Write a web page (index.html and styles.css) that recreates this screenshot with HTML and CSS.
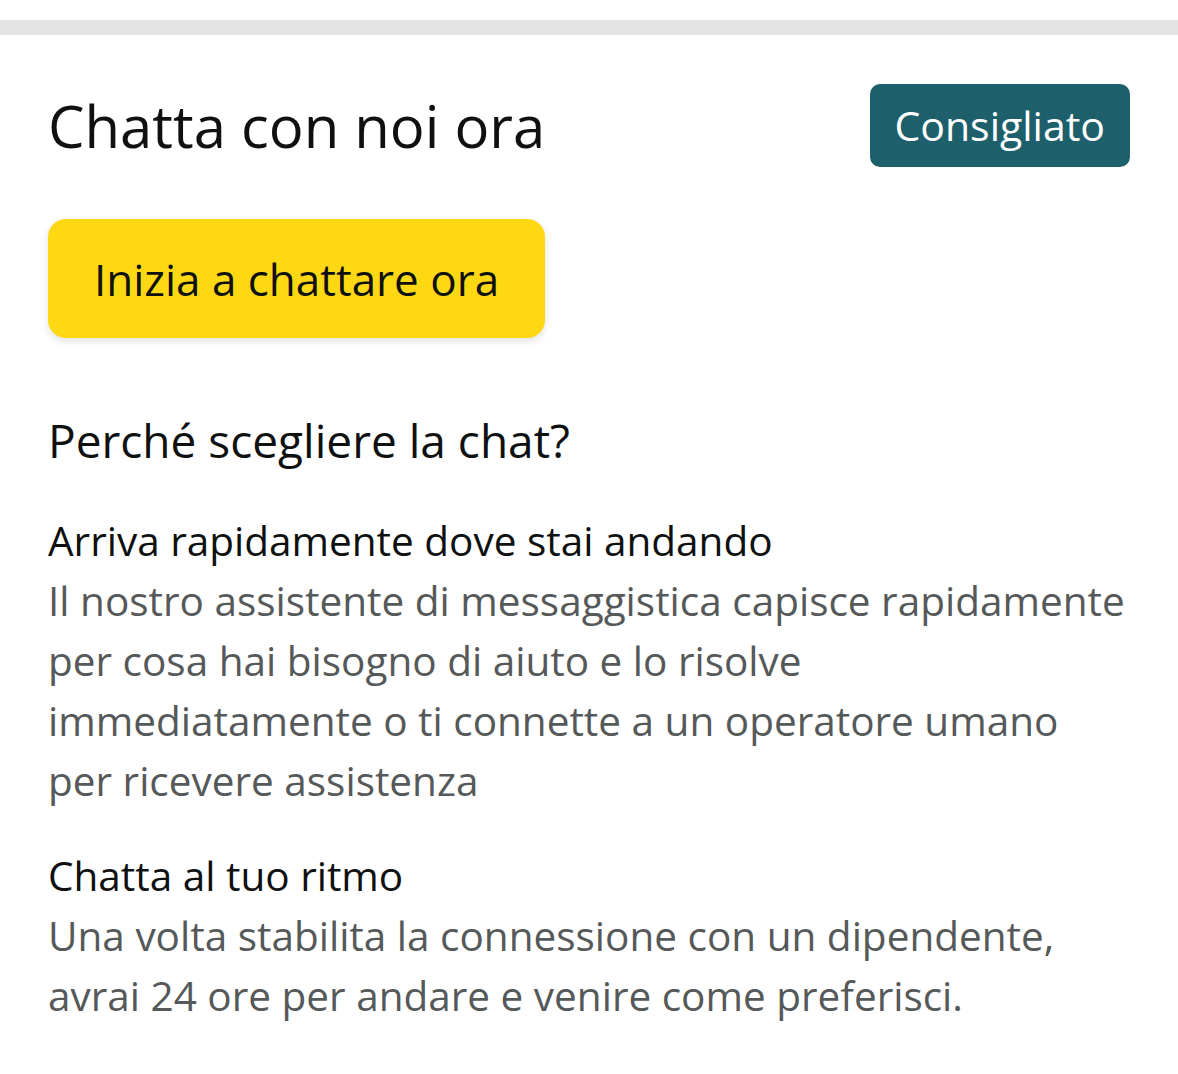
FILE: index.html
```html
<!DOCTYPE html>
<html lang="it">
<head>
<meta charset="UTF-8" /><meta name="viewport"
content="width=device-width, initial-scale=1.0" />
<title>Chatta con noi</title>
<link rel="stylesheet" href="styles.css">
</head>
<body>
<div class="topbar"></div>
<div class="card">
<div class="head">
<h1>Chatta con noi ora</h1>
<span class="badge">Consigliato</span>
</div>
<button class="btn">Inizia a chattare ora</button>
<h2>Perché scegliere la chat?</h2>
<div class="item">
<h3>Arriva rapidamente dove stai andando</h3>
<p>Il nostro assistente di messaggistica capisce rapidamente per cosa hai bisogno di aiuto e lo risolve immediatamente o ti connette a un operatore umano per ricevere assistenza</p>
</div>
<div class="item">
<h3>Chatta al tuo ritmo</h3>
<p>Una volta stabilita la connessione con un dipendente, avrai 24 ore per andare e venire come preferisci.</p>
</div>
</div>
</body>
</html>
```

FILE: styles.css
```css
body { margin: 0; background: #fff; color: #0f1111; font-family: "Open Sans", "Noto Sans", sans-serif; }
.topbar { height: 15px; margin-top: 20px; background: #e3e3e3; }
.card { padding: 49px 48px 40px; }
.head { display: flex; justify-content: space-between; align-items: center; }
h1 { margin: 0; font-size: 58px; font-weight: 400; line-height: 83px; }
.badge { background: #1e5f6c; color: #fff; font-size: 41px; padding: 0 25px 0 24px; height: 83px; line-height: 83px; border-radius: 10px; }
.btn { display: block; margin: 52px 0 0; width: 497px; height: 119px; border: none; border-radius: 18px; background: #ffd814; color: #0f1111; font-family: inherit; font-size: 44px; box-shadow: 0 3px 8px rgba(0,0,0,.12); }
h2 { margin: 77px 0 0; font-size: 46px; font-weight: 400; line-height: 50px; }
.item { margin-top: 46px; }
.item + .item { margin-top: 35px; }
h3 { margin: 0; font-size: 40.5px; font-weight: 400; line-height: 60px; }
p { margin: 0; font-size: 40.5px; line-height: 60px; color: #565959; }
```
